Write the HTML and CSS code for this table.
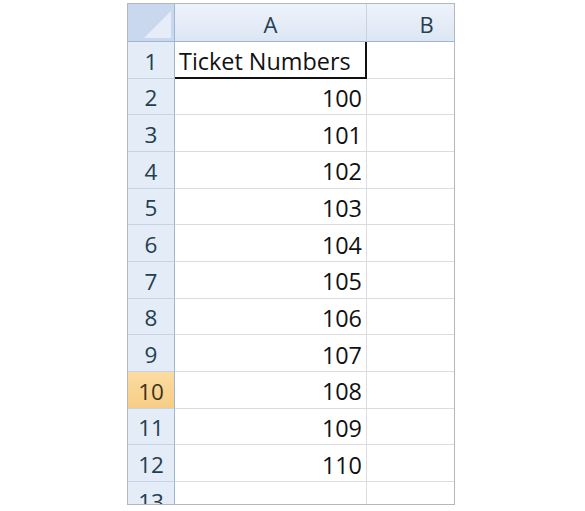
FILE: index.html
```html
<!DOCTYPE html>
<html>
<head>
<meta charset="utf-8">
<link rel="stylesheet" href="styles.css">
</head>
<body>
<div class="sheet">
  <div class="grid">
    <div class="corner"><span class="tri"></span></div>
    <div class="colhead">A</div>
    <div class="colhead">B</div>

    <div class="rowhead">1</div>
    <div class="cell active text">Ticket Numbers</div>
    <div class="cell"></div>

    <div class="rowhead">2</div><div class="cell num">100</div><div class="cell"></div>
    <div class="rowhead">3</div><div class="cell num">101</div><div class="cell"></div>
    <div class="rowhead">4</div><div class="cell num">102</div><div class="cell"></div>
    <div class="rowhead">5</div><div class="cell num">103</div><div class="cell"></div>
    <div class="rowhead">6</div><div class="cell num">104</div><div class="cell"></div>
    <div class="rowhead">7</div><div class="cell num">105</div><div class="cell"></div>
    <div class="rowhead">8</div><div class="cell num">106</div><div class="cell"></div>
    <div class="rowhead">9</div><div class="cell num">107</div><div class="cell"></div>
    <div class="rowhead sel">10</div><div class="cell num">108</div><div class="cell"></div>
    <div class="rowhead">11</div><div class="cell num">109</div><div class="cell"></div>
    <div class="rowhead">12</div><div class="cell num">110</div><div class="cell"></div>
    <div class="rowhead">13</div><div class="cell"></div><div class="cell"></div>
  </div>
</div>
</body>
</html>
```

FILE: styles.css
```css
html, body {
  margin: 0;
  padding: 0;
  background: #ffffff;
}

body {
  font-family: "Open Sans", "Noto Sans", sans-serif;
}

.sheet {
  margin: 3px 0 0 127px;
  width: 326px;
  height: 500px;
  border: 1px solid #b4b7bb;
  overflow: hidden;
}

.grid {
  display: grid;
  grid-template-columns: 47px 192px 120px;
  grid-template-rows: 38px repeat(13, 36.67px);
  width: 359px;
}

.corner {
  position: relative;
  background: #c9d8ee;
  border-right: 1px solid #9eb6ce;
  border-bottom: 1px solid #9eb6ce;
}

.tri {
  position: absolute;
  right: 3px;
  bottom: 3px;
  width: 0;
  height: 0;
  border-left: 27px solid transparent;
  border-bottom: 27px solid #e6edf8;
}

.colhead {
  display: flex;
  align-items: center;
  justify-content: center;
  padding-top: 2px;
  background: linear-gradient(#eef3fa, #dce6f4);
  border-right: 1px solid #c5d3e4;
  border-bottom: 1px solid #9eb6ce;
  color: #23404f;
  font-size: 22px;
}

.rowhead {
  display: flex;
  align-items: center;
  justify-content: center;
  padding-top: 3px;
  background: #e4ecf7;
  border-right: 1px solid #9eb6ce;
  border-bottom: 1px solid #c5d3e4;
  color: #23404f;
  font-size: 22.5px;
}

.rowhead.sel {
  background: linear-gradient(#fbdca2, #f7cd84);
  color: #3a3320;
}

.cell {
  display: flex;
  align-items: center;
  padding-top: 3px;
  border-right: 1px solid #dadcdd;
  border-bottom: 1px solid #dadcdd;
  color: #111111;
  font-size: 23.4px;
  white-space: nowrap;
}

.cell.text {
  padding-left: 4px;
}

.cell.num {
  justify-content: flex-end;
  padding-right: 4px;
}

.cell.active {
  border-right: 2px solid #111111;
  border-bottom: 2px solid #111111;
}
```
